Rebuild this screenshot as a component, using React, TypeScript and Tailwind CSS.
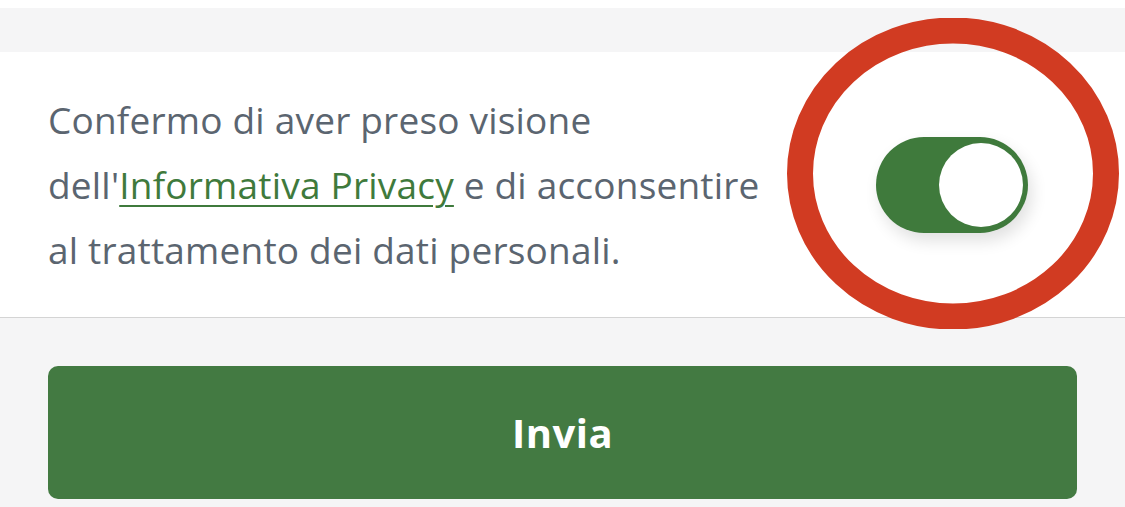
import { useState } from "react";

export default function App() {
    const [accepted, setAccepted] = useState(true);

    return (
        <div className="w-[1125px] h-[507px] overflow-hidden bg-[#f5f5f6] relative" style={{ fontFamily: '"Open Sans", "Noto Sans", sans-serif' }}>
            <div className="h-[8px] bg-white" />
            <div className="h-[44px]" />

            {/* Consent row */}
            <div className="h-[266px] bg-white border-b border-[#d4d4d4] flex items-center justify-between pl-[48px] pr-[97px]">
                <p className="w-[760px] text-[37px] leading-[65px] tracking-[0.2px] text-[#5b6570]">
                    Confermo di aver preso visione
                    <br />
                    dell'<a href="#" className="text-[#3f7a3c] underline underline-offset-[6px] decoration-[2px]">Informativa Privacy</a> e di acconsentire
                    <br />
                    al trattamento dei dati personali.
                </p>

                <button
                    onClick={() => setAccepted(!accepted)}
                    className={`relative shrink-0 w-[152px] h-[96px] rounded-full shadow-[4px_8px_16px_rgba(0,0,0,0.12)] ${accepted ? "bg-[#3f7a3c]" : "bg-[#c9c9c9]"}`}
                >
                    <span className={`absolute top-[6px] w-[84px] h-[84px] rounded-full bg-white ${accepted ? "left-[63px]" : "left-[5px]"}`} />
                </button>
            </div>

            {/* Submit */}
            <div className="px-[48px] pt-[48px]">
                <button className="w-full h-[133px] rounded-[10px] bg-[#437a42] text-white text-[40px] font-bold tracking-[0.5px]">
                    Invia
                </button>
            </div>

            {/* Red highlight ring */}
            <svg className="absolute left-[787px] top-[18px] pointer-events-none" width="332" height="311" viewBox="0 0 332 311">
                <ellipse cx="166" cy="155.5" rx="153" ry="143" fill="none" stroke="#d13b22" strokeWidth="26" />
            </svg>
        </div>
    );
}
